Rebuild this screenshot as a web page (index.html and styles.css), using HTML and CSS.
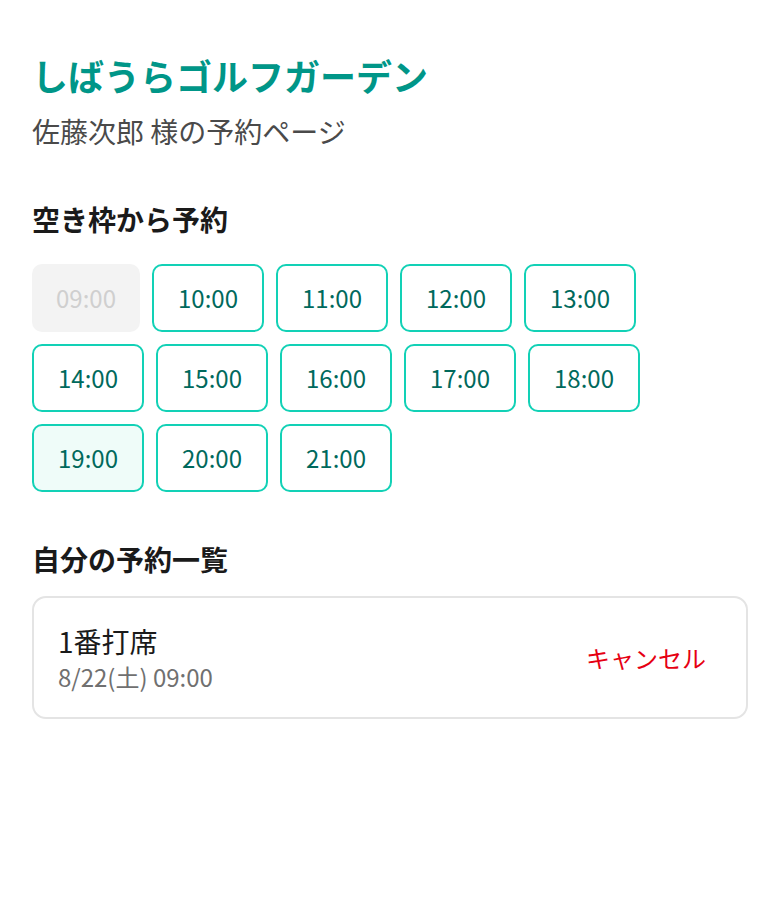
FILE: index.html
```html
<!DOCTYPE html>
<html lang="ja">
<head>
<meta charset="utf-8">
<title>しばうらゴルフガーデン</title>
<link rel="stylesheet" href="styles.css">
</head>
<body>
<main class="page">
  <header class="header">
    <h1 class="title">しばうらゴルフガーデン</h1>
    <p class="subtitle">佐藤次郎 様の予約ページ</p>
  </header>
  <section class="section section-slots">
    <h2 class="heading heading-slots">空き枠から予約</h2>
    <div class="slots">
      <button class="slot slot-disabled" disabled>09:00</button>
      <button class="slot">10:00</button>
      <button class="slot">11:00</button>
      <button class="slot">12:00</button>
      <button class="slot">13:00</button>
      <button class="slot">14:00</button>
      <button class="slot">15:00</button>
      <button class="slot">16:00</button>
      <button class="slot">17:00</button>
      <button class="slot">18:00</button>
      <button class="slot slot-active">19:00</button>
      <button class="slot">20:00</button>
      <button class="slot">21:00</button>
    </div>
  </section>
  <section class="section">
    <h2 class="heading heading-list">自分の予約一覧</h2>
    <div class="card">
      <div class="card-info">
        <div class="card-name">1番打席</div>
        <div class="card-time">8/22(土) 09:00</div>
      </div>
      <button class="cancel">キャンセル</button>
    </div>
  </section>
</main>
</body>
</html>
```
FILE: styles.css
```css
* { box-sizing: border-box; }
html, body { margin: 0; padding: 0; background: #fff; }
body {
  font-family: "Noto Sans CJK JP", "Noto Sans", sans-serif;
  color: #1a1a1a;
}
.page {
  padding: 48px 32px 32px 32px;
  width: 780px;
}
.header { margin-bottom: 48px; }
.title {
  margin: 0;
  font-size: 36px;
  line-height: 54px;
  font-weight: 700;
  color: #009688;
}
.subtitle {
  margin: 9px 0 0 0;
  font-size: 28px;
  line-height: 40px;
  color: #4a4a4a;
}
.section-slots { margin-bottom: 47px; }
.heading {
  margin: 0;
  font-size: 28px;
  line-height: 40px;
  font-weight: 700;
  color: #1a1a1a;
}
.heading-slots { margin-bottom: 25px; }
.heading-list { margin-bottom: 17px; }
.slots {
  display: flex;
  flex-wrap: wrap;
  gap: 12px 12px;
  width: 620px;
}
.slot {
  width: 112px;
  height: 68px;
  padding: 0;
  border: 2px solid #12d1b6;
  border-radius: 10px;
  background: #fff;
  color: #00695c;
  font-family: "Noto Sans CJK JP", "Noto Sans", sans-serif;
  font-size: 24px;
  line-height: 1;
  cursor: pointer;
}
.slot-disabled {
  width: 108px;
  border: 0;
  background: #f3f3f3;
  color: #cfcfcf;
}
.slot-active { background: #effcf9; }
.card {
  display: flex;
  align-items: center;
  justify-content: space-between;
  border: 2px solid #e4e4e4;
  border-radius: 14px;
  padding: 0 40px 0 24px;
  width: 716px;
  height: 123px;
}
.card-name {
  font-size: 28px;
  line-height: 38px;
  color: #1a1a1a;
}
.card-time {
  font-size: 24px;
  line-height: 34px;
  color: #707070;
}
.cancel {
  border: 0;
  background: none;
  padding: 0;
  font-family: "Noto Sans CJK JP", "Noto Sans", sans-serif;
  font-size: 24px;
  line-height: 34px;
  color: #e60012;
  cursor: pointer;
}
```
